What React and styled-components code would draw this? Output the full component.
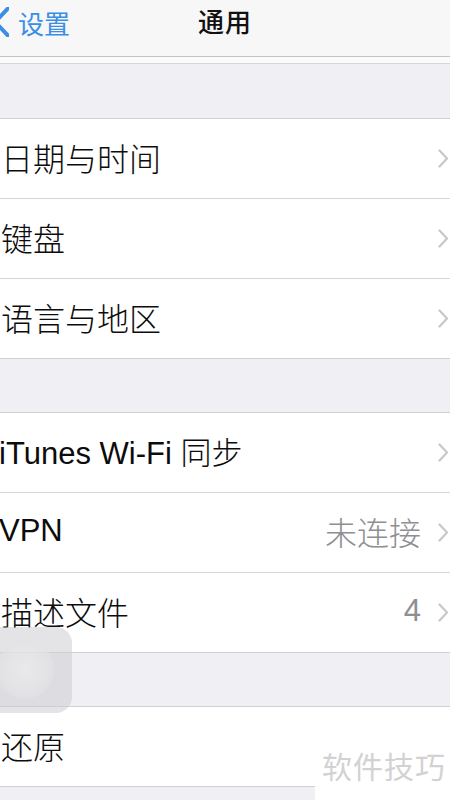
import React from "react";
import styled, { createGlobalStyle } from "styled-components";

const GlobalStyle = createGlobalStyle`
  html, body {
    margin: 0;
    padding: 0;
    background: #efeff4;
  }
  body {
    font-family: "Noto Sans CJK SC", "Liberation Sans", sans-serif;
    -webkit-font-smoothing: antialiased;
  }
`;

const Screen = styled.div`
  position: relative;
  width: 450px;
  height: 800px;
  overflow: hidden;
  background: #efeff4;
`;

const NavBar = styled.div`
  position: relative;
  height: 56px;
  background: #f7f7f7;
  border-bottom: 1px solid #c4c4c4;
  display: flex;
  align-items: center;
  justify-content: center;
`;

const BackButton = styled.div`
  position: absolute;
  left: 0;
  top: 0;
  height: 44px;
  display: flex;
  align-items: center;
  gap: 9px;
  color: #3a8ee6;
  font-size: 26px;
`;

const NavTitle = styled.div`
  font-size: 26px;
  font-weight: 500;
  color: #111;
  margin-top: -15px;
  letter-spacing: 1px;
`;

const NavGap = styled.div`
  height: 6px;
  background: #fbfbfb;
  border-bottom: 1px solid #d6d6d8;
`;

const SectionGap = styled.div`
  height: ${(p) => p.h}px;
  background: #efeff4;
`;

const Group = styled.div`
  background: #fff;
  border-top: 1px solid #d0d0d4;
  border-bottom: 1px solid #d0d0d4;
`;

const Row = styled.div`
  height: 79px;
  display: flex;
  align-items: center;
  padding: 0 1px 0 1px;
  border-top: ${(p) => (p.first ? "none" : "1px solid #d6d6d8")};
`;

const Label = styled.div`
  flex: 1;
  font-size: ${(p) => (p.latin ? 31 : 32)}px;
  font-weight: 300;
  color: #0c0c0c;
  font-family: ${(p) =>
    p.latin
      ? `"Liberation Sans", "Noto Sans CJK SC", sans-serif`
      : `"Noto Sans CJK SC", sans-serif`};
  margin-top: -4px;
  margin-left: ${(p) => (p.latin ? -2 : 0)}px;
`;

const Value = styled.div`
  font-size: ${(p) => (p.latin ? 31 : 32)}px;
  font-weight: 300;
  color: #8e8e93;
  margin-right: 17px;
  font-family: ${(p) =>
    p.latin
      ? `"Liberation Sans", "Noto Sans CJK SC", sans-serif`
      : `"Noto Sans CJK SC", sans-serif`};
  margin-top: -4px;
`;

const Overlay = styled.div`
  position: absolute;
  left: -20px;
  top: 627px;
  width: 92px;
  height: 86px;
  border-radius: 16px;
  background: rgba(205, 205, 210, 0.55);
  display: flex;
  align-items: center;
  justify-content: center;
`;

const OverlayDot = styled.div`
  width: 58px;
  height: 58px;
  border-radius: 50%;
  margin-left: -2px;
  background: radial-gradient(
    circle,
    rgba(238, 238, 240, 0.7) 0%,
    rgba(230, 230, 232, 0.65) 55%,
    rgba(218, 218, 222, 0.55) 100%
  );
`;

const Watermark = styled.div`
  position: absolute;
  right: 0;
  bottom: 0;
  width: 135px;
  height: 58px;
  background: #fff;
  color: #d2d2d2;
  font-size: 30px;
  font-family: "Noto Sans CJK SC", sans-serif;
  display: flex;
  align-items: center;
  justify-content: flex-end;
  padding-right: 4px;
  box-sizing: border-box;
  padding-bottom: 12px;
  letter-spacing: 1px;
`;

const Chevron = () => (
  <svg width="11" height="19" viewBox="0 0 11 19" fill="none">
    <path
      d="M1.5 1.5 L9 9.5 L1.5 17.5"
      stroke="#c7c7cc"
      strokeWidth="2.2"
      strokeLinecap="round"
      strokeLinejoin="round"
    />
  </svg>
);

const BackChevron = () => (
  <svg width="9" height="30" viewBox="0 0 9 30" fill="none">
    <path
      d="M8 1.5 L-5 15 L8 28.5"
      stroke="#3a8ee6"
      strokeWidth="4"
      strokeLinecap="round"
      strokeLinejoin="round"
    />
  </svg>
);

const groups = [
  [{ label: "日期与时间" }, { label: "键盘" }, { label: "语言与地区" }],
  [
    { label: "iTunes Wi-Fi 同步", latin: true },
    { label: "VPN", latin: true, value: "未连接" },
    { label: "描述文件", value: "4", valueLatin: true },
  ],
];

export default function App() {
  return (
    <Screen>
      <GlobalStyle />
      <NavBar>
        <BackButton>
          <BackChevron />
          <span>设置</span>
        </BackButton>
        <NavTitle>通用</NavTitle>
      </NavBar>
      <NavGap />
      <SectionGap h={54} />
      {groups.map((items, gi) => (
        <React.Fragment key={gi}>
          <Group>
            {items.map((it, i) => (
              <Row key={it.label} first={i === 0}>
                <Label latin={it.latin}>{it.label}</Label>
                {it.value && <Value latin={it.valueLatin}>{it.value}</Value>}
                <Chevron />
              </Row>
            ))}
          </Group>
          <SectionGap h={53} />
        </React.Fragment>
      ))}
      <Group>
        <Row first>
          <Label>还原</Label>
        </Row>
      </Group>
      <Overlay>
        <OverlayDot />
      </Overlay>
      <Watermark>软件技巧</Watermark>
    </Screen>
  );
}
